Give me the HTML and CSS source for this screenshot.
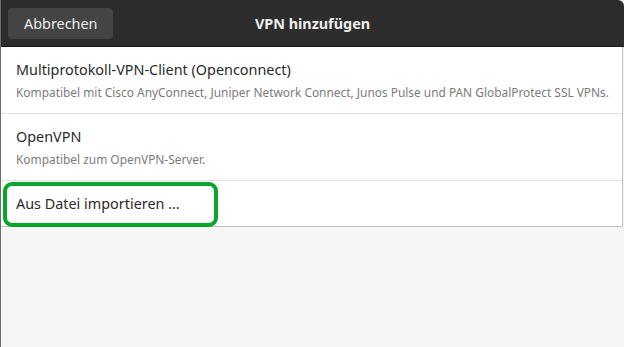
FILE: index.html
```html
<!DOCTYPE html>
<html lang="de">
<head>
    <meta charset="UTF-8">
    <meta name="viewport" content="width=device-width, initial-scale=1.0">
    <title>VPN hinzufügen</title>
    <link rel="stylesheet" href="styles.css">
</head>
<body>
    <div class="window">
        <header class="headerbar">
            <button class="cancel-btn">Abbrechen</button>
            <h1 class="title">VPN hinzufügen</h1>
        </header>

        <div class="content">
            <ul class="vpn-list">
                <li class="vpn-row">
                    <span class="row-title">Multiprotokoll-VPN-Client (Openconnect)</span>
                    <span class="row-sub">Kompatibel mit Cisco AnyConnect, Juniper Network Connect, Junos Pulse und PAN GlobalProtect SSL VPNs.</span>
                </li>
                <li class="vpn-row">
                    <span class="row-title">OpenVPN</span>
                    <span class="row-sub">Kompatibel zum OpenVPN-Server.</span>
                </li>
                <li class="vpn-row import-row">
                    <span class="row-title">Aus Datei importieren …</span>
                    <!-- highlight marker -->
                    <span class="highlight"></span>
                </li>
            </ul>
        </div>
    </div>
</body>
</html>
```

FILE: styles.css
```css
body {
    margin: 0;
    padding: 0;
    font-family: 'Noto Sans', 'Open Sans', sans-serif;
    background-color: #f6f6f6;
}

.window {
    height: 347px;
    border-left: 1px solid #6e6e6e;
    display: flex;
    flex-direction: column;
    box-sizing: border-box;
}

.headerbar {
    height: 46px;
    background-color: #2e2d2d;
    border-bottom: 1px solid #1a1a1a;
    border-top-right-radius: 6px;
    display: flex;
    align-items: center;
    position: relative;
    padding: 0 7px;
}

.cancel-btn {
    font-family: inherit;
    font-size: 14.4px;
    color: #eeeeec;
    background-color: #454444;
    border: none;
    border-radius: 4px;
    height: 31px;
    padding: 0 16px;
}

.title {
    position: absolute;
    left: 0;
    right: 0;
    text-align: center;
    margin: 0;
    font-size: 14.4px;
    font-weight: bold;
    color: #eeeeec;
    pointer-events: none;
}

.content {
    flex: 1;
    background-color: #f6f6f6;
}

.vpn-list {
    list-style: none;
    margin: 0;
    padding: 0;
    width: 622px;
    background-color: white;
    border-right: 1px solid #c0c0c0;
    border-bottom: 1px solid #c0c0c0;
    box-sizing: border-box;
}

.vpn-row {
    display: flex;
    flex-direction: column;
    justify-content: center;
    gap: 5px;
    padding: 0 4px 0 15px;
    height: 67px;
    border-bottom: 1px solid #e2e2e2;
    box-sizing: border-box;
    position: relative;
    white-space: nowrap;
}

.vpn-row:last-child {
    border-bottom: none;
    height: 45px;
}

.row-title {
    font-size: 14.4px;
    color: #2a2a2a;
}

.row-sub {
    font-size: 11.9px;
    color: #7b7b7b;
}

.highlight {
    position: absolute;
    left: 2px;
    top: 1px;
    width: 215px;
    height: 45px;
    border: 4px solid #08a62a;
    border-radius: 9px;
    box-sizing: border-box;
}
```
